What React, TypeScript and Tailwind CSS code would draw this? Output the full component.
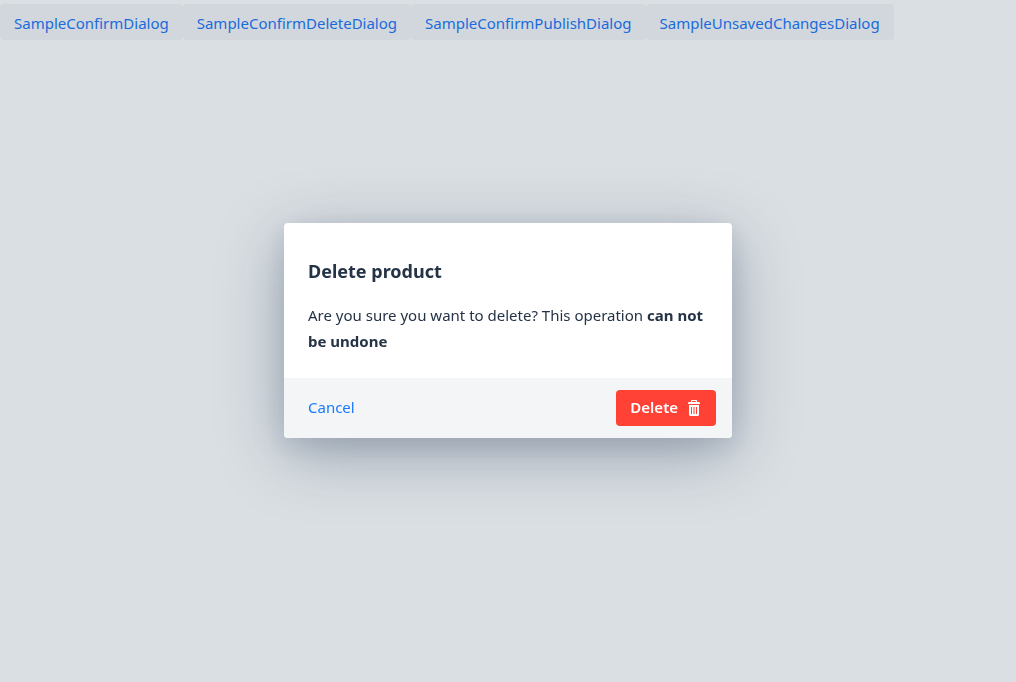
import React from "react";

const samples = [
  "SampleConfirmDialog",
  "SampleConfirmDeleteDialog",
  "SampleConfirmPublishDialog",
  "SampleUnsavedChangesDialog",
];

function TrashIcon() {
  return (
    <svg width="16" height="16" viewBox="0 0 16 16" fill="none" stroke="currentColor" aria-hidden="true">
      <path d="M5.5 2.5V1.3q0-.8.8-.8h3.4q.8 0 .8.8v1.2" strokeWidth="1.2" />
      <path d="M3.2 2h9.6Q14 2 14 3.2V4H2v-.8Q2 2 3.2 2z" fill="currentColor" stroke="none" />
      <path
        d="M3 5h10v9.5q0 1.5-1.5 1.5h-7Q3 16 3 14.500zM5 7v7h1V7zM7.500 7v7h1V7zM10 7v7h1V7z"
        fill="currentColor"
        fillRule="evenodd"
        stroke="none"
      />
    </svg>
  );
}

export default function App() {
  return (
    <div className="min-h-screen bg-[#dadfe3] font-['Noto_Sans',sans-serif] text-[15px] text-[#253347]">
      <nav className="flex flex-wrap pt-1">
        {samples.map((name) => (
          <button key={name} type="button" className="h-9 rounded bg-[#d1d7dd] px-3.5 pt-0.5 text-[#1a6bdb]">
            {name}
          </button>
        ))}
      </nav>
      <div className="fixed inset-0 flex items-center justify-center pb-[22px]">
        <section
          role="dialog"
          aria-modal="true"
          aria-labelledby="dialog-title"
          className="w-full max-w-md overflow-hidden rounded bg-white shadow-[0_16px_64px_rgba(38,57,90,0.36),0_8px_24px_rgba(38,67,90,0.12)]"
        >
          <div className="px-6 pt-9 pb-6">
            <h1 id="dialog-title" className="text-lg leading-6 font-bold">Delete product</h1>
            <p className="mt-[19px] leading-[26px]">
              Are you sure you want to delete? This operation <strong>can not be undone</strong>
            </p>
          </div>
          <footer className="flex items-center justify-between bg-[#f3f5f7] py-3 pr-4 pl-6">
            <button type="button" className="text-[#1a7aff]">Cancel</button>
            <button type="button" className="flex h-9 items-center gap-2 rounded bg-[#ff4136] px-3.5 font-semibold text-white">
              Delete
              <TrashIcon />
            </button>
          </footer>
        </section>
      </div>
    </div>
  );
}
